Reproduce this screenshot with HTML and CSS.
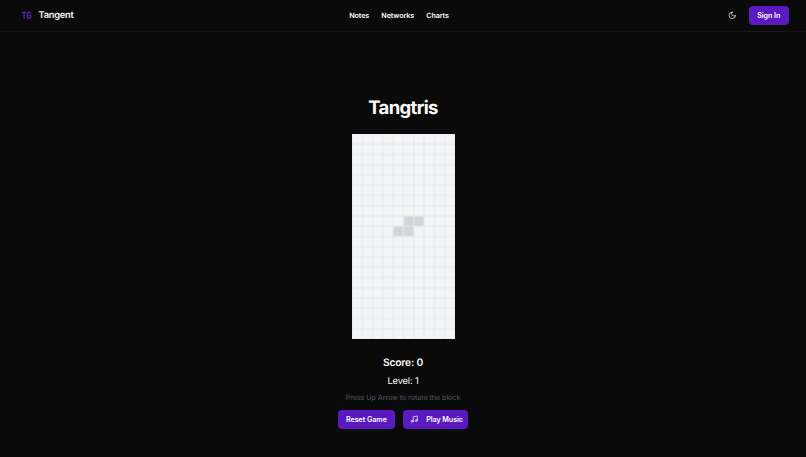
FILE: index.html
```html
<!DOCTYPE html>
<html lang="en">
<head>
<meta charset="utf-8">
<title>Tangent</title>
<link rel="stylesheet" href="styles.css">
</head>
<body>
<header class="header">
  <a class="brand"><span class="logo">TG</span><span class="brand-name">Tangent</span></a>
  <nav class="nav"><a>Notes</a><a>Networks</a><a>Charts</a></nav>
  <div class="actions">
    <svg class="moon" viewBox="0 0 24 24"><path d="M12 3a6 6 0 0 0 9 9 9 9 0 1 1-9-9Z"/></svg>
    <button class="button sign-in">Sign In</button>
  </div>
</header>
<main class="main">
  <h1 class="title">Tangtris</h1>
  <svg class="board" viewBox="0 0 200 400" preserveAspectRatio="none">
    <defs><pattern id="cell" width="20" height="20" patternUnits="userSpaceOnUse"><path class="grid-line" d="M0 0H20V20H0Z"/></pattern></defs>
    <rect class="board-fill" width="200" height="400"/>
    <path class="piece" d="M100 160h40v20h-20v20H80v-20h20Z"/>
    <rect width="200" height="400" fill="url(#cell)"/>
  </svg>
  <p class="score">Score: 0</p>
  <p class="level">Level: 1</p>
  <p class="hint">Press Up Arrow to rotate the block</p>
  <div class="controls">
    <button class="button reset">Reset Game</button>
    <button class="button music"><svg class="note" viewBox="0 0 24 24"><path d="M9 18V5l12-2v13"/><circle cx="6" cy="18" r="3"/><circle cx="18" cy="16" r="3"/></svg><span class="music-label">Play Music</span></button>
  </div>
</main>
</body>
</html>
```
FILE: styles.css
```css
* { box-sizing: border-box; }
body {
  margin: 0;
  height: 457px;
  overflow: hidden;
  background: #0a0a0a;
  color: #fafafa;
  font-family: Inter, "Liberation Sans", sans-serif;
  text-rendering: geometricPrecision;
}
.header {
  display: grid;
  grid-template-columns: 1fr auto 1fr;
  align-items: center;
  height: 32px;
  padding: 0 17.5px 0 21.5px;
  border-bottom: 1px solid #161616;
}
.brand { display: flex; align-items: center; }
.logo {
  width: 12px;
  margin-right: 5px;
  color: #5b21b6;
  font: 700 8.5px/10px "Liberation Mono", monospace;
  letter-spacing: -0.2px;
  transform: scaleY(1.3);
}
.brand-name { padding-top: 1px; font-size: 9.3px; font-weight: 600; line-height: 14px; letter-spacing: -0.25px; }
.nav {
  display: flex;
  gap: 12.2px;
  margin-right: 12px;
  font-size: 7.2px;
  font-weight: 600;
  line-height: 10px;
  letter-spacing: -0.12px;
}
.actions { display: flex; align-items: center; justify-content: flex-end; }
.moon { width: 8.6px; height: 8.6px; margin-right: 12px; }
.moon, .note {
  fill: none;
  stroke: #fafafa;
  stroke-width: 2;
  stroke-linecap: round;
  stroke-linejoin: round;
}
.button {
  display: flex;
  align-items: center;
  justify-content: center;
  height: 18.5px;
  padding: 0;
  border: 0;
  border-radius: 4px;
  background: #5b1abf;
  color: #fafafa;
  font-family: inherit;
  font-size: 7.2px;
  font-weight: 600;
  letter-spacing: -0.08px;
  white-space: nowrap;
}
.sign-in { width: 39.5px; }
.main { display: flex; flex-direction: column; align-items: center; padding-top: 66px; }
.title {
  margin: 0 0 15px;
  font-size: 18.5px;
  font-weight: 700;
  line-height: 21px;
  letter-spacing: -0.65px;
}
.board { display: block; width: 103px; height: 205px; margin-left: 1px; }
.board-fill { fill: #f3f4f6; }
.grid-line { fill: none; stroke: #e5e7eb; stroke-width: 2; }
.piece { fill: #d1d5db; }
.score, .level, .hint { margin: 0; }
.score { margin-top: 17px; font-size: 10.3px; font-weight: 600; line-height: 14px; letter-spacing: -0.2px; }
.level { margin-top: 5px; font-size: 9.3px; line-height: 14px; letter-spacing: -0.15px; }
.hint { margin-top: 4px; color: #4f5661; font-size: 7.2px; line-height: 10px; letter-spacing: -0.07px; }
.controls { display: flex; gap: 8.2px; margin-top: 7.2px; }
.reset { width: 57.5px; }
.music { width: 65px; padding-left: 1px; }
.note { width: 8.4px; height: 8.4px; margin-right: 8px; }
```
